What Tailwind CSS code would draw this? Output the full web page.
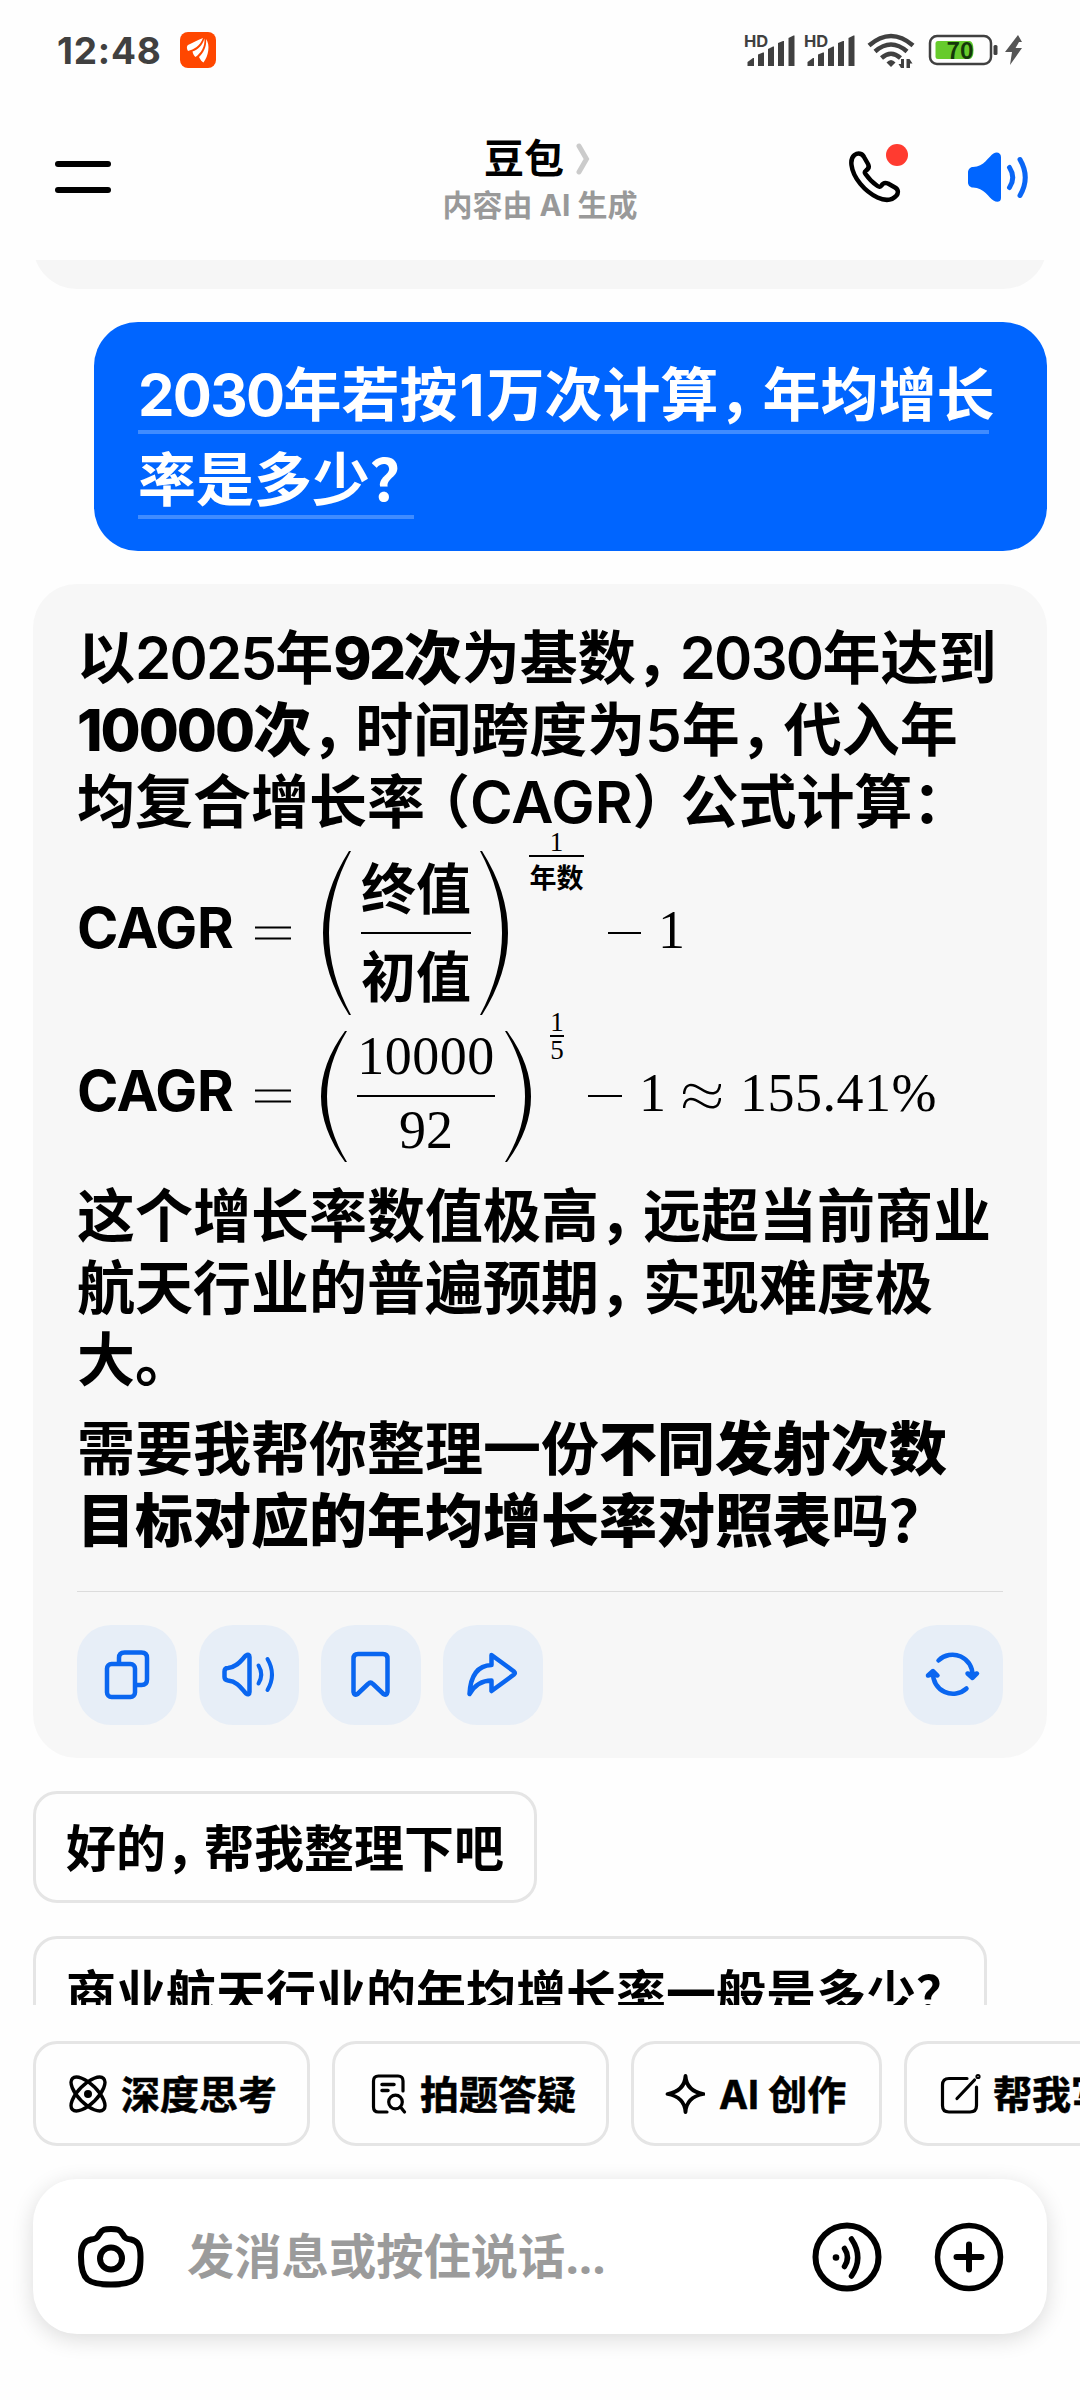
<!DOCTYPE html>
<html lang="zh-CN">
<head>
    <meta charset="UTF-8">
    <meta name="viewport" content="width=device-width, initial-scale=1.0">
    <title>豆包</title>
    <script src="https://cdn.jsdelivr.net/npm/@tailwindcss/browser@4"></script>
</head>
<body class="bg-[#fefefe]">
    <div class="w-[1080px] h-[2400px] overflow-hidden flex flex-col font-bold text-black font-['Inter','Noto_Sans_CJK_SC',sans-serif]">

        <!-- Status bar -->
        <div class="h-[100px] shrink-0 flex items-center pl-[57px] pr-[57px] text-[#404040]">
            <div class="w-[123px] text-[37px] leading-[40px] tracking-[0.8px] pt-px">12:48</div>
            <svg class="w-9 h-9" viewBox="0 0 36 36">
                <rect width="36" height="36" rx="8" fill="#ff4700"/>
                <g fill="#fff">
                    <path d="M23 6C17 8 13 11 8 13C6.500 14 6.500 17 8 19C14 17.500 20 14 23 6Z"/>
                    <path d="M24.500 6.500C22 14 18 17.500 12.500 19.500C13 22 14 24 15.500 25C21 21 25 15 24.500 6.500Z"/>
                    <path d="M26 7C27 15 23 21 19 25C20.500 28 22 30 23.500 30.500C28.500 24 30.500 13 26 7Z"/>
                </g>
            </svg>
            <div class="flex-1"></div>
            <svg class="w-[280px] h-10" viewBox="743 30 280 40" fill="#404040">
                <g font-family="Inter, sans-serif" font-weight="700" font-size="16.500">
                    <text x="744" y="46.500">HD</text>
                    <text x="804" y="46.500">HD</text>
                </g>
                <g id="bars">
                    <path d="M747.500 66V62L753 58H754V66Z"/>
                    <path d="M758 66V54.500L763 52.500H764V66Z"/>
                    <path d="M768 66V49L773 46.500H774V66Z"/>
                    <path d="M778 66V43L783 41H784V66Z"/>
                    <path d="M788.500 66V38L793.500 35.500H794.500V66Z"/>
                </g>
                <use href="#bars" x="60"/>
                <g fill="none" stroke="#404040" stroke-width="4.500">
                    <path d="M869 45.500Q891 26.500 913 45.500"/>
                    <path d="M875 51.500Q891 37.500 907 51.500"/>
                    <path d="M881.500 58Q891 49.500 900.500 58"/>
                </g>
                <path d="M886.500 62.500Q891 57.500 895.500 62.500L891 67Z"/>
                <path d="M904 59V68H901L898.500 64H901V59ZM906.500 68V59H909.500L912.500 63.500H910V68Z"/>
                <rect x="930" y="36" width="61" height="28" rx="7" fill="none" stroke="#404040" stroke-width="2.500"/>
                <path d="M938 41H970V59H938Q935.500 59 935.500 56.500V43.500Q935.500 41 938 41Z" fill="#66cb2c"/>
                <path d="M970 41Q973.500 42 973.500 50T970 59Z" fill="#66cb2c"/>
                <rect x="993.500" y="45" width="4" height="10" rx="1.500"/>
                <text x="960" y="59" text-anchor="middle" font-family="Noto Sans CJK SC, sans-serif" font-weight="700" font-size="23" fill="#14380a">70</text>
                <path d="M1018 35L1005 52H1012L1010 65L1022 48H1015.500L1019 42H1022Z" fill="#555"/>
            </svg>
        </div>

        <!-- Header -->
        <header class="relative h-40 shrink-0 flex justify-between pl-[55px] pr-[51px]">
            <div class="mt-[61px] flex flex-col gap-5">
                <span class="w-14 h-1.5 rounded-full bg-black"></span>
                <span class="w-14 h-1.5 rounded-full bg-black"></span>
            </div>
            <div class="absolute inset-x-0 top-[35px] flex flex-col items-center">
                <div class="flex items-center gap-3 pr-1.5">
                    <h1 class="text-[40px] leading-[48px]">豆包</h1>
                    <svg class="w-3.5 h-8" viewBox="0 0 14 32"><path d="M3 3L10.500 16L3 29" fill="none" stroke="#cbcbcb" stroke-width="5" stroke-linecap="round"/></svg>
                </div>
                <p class="text-[30px] leading-[44px] text-[#999]">内容由 AI 生成</p>
            </div>
            <div class="flex gap-[58px] mt-[43px]">
                <svg class="w-[62px] h-[62px]" viewBox="847 143 62 62">
                    <path d="M854.500 155C858 152.500 862.500 153.500 864 157L868 164C869.500 167 868.500 169 866 170.500C864.500 171.500 864.500 172.500 865.500 174C869 179 873 183 877.500 186C879 187 880.500 187 881.500 185.500C883 183 885.500 182.500 888 183.500L895 187.500C898.500 189.500 898.500 193 896.500 195.500C892 200.500 885 201 877.500 197.500C865 191.500 853 178 851.500 165C851 161 852 157 854.500 155Z" fill="none" stroke="#000" stroke-width="4.500" stroke-linejoin="round"/>
                    <circle cx="897" cy="155" r="11" fill="#ff3b30"/>
                </svg>
                <svg class="w-[62px] h-[62px]" viewBox="967 143 62 62">
                    <path d="M973 167C984 167 989 156 993.500 153.500C997 151.500 1001 153 1001 157V198C1001 202 997 203 993.500 200.500C989 198 984 187.500 973 187.500C970 187.500 968 185 968 182.500V172.500C968 169.500 970 167 973 167Z" fill="#0065ff"/>
                    <g fill="none" stroke="#0a66f5" stroke-width="5" stroke-linecap="round"><path d="M1009.500 167.500Q1016 177.500 1009.500 187.500"/><path d="M1020 159.500Q1030.500 177.500 1020 195.500"/></g>
                </svg>
            </div>
        </header>

        <!-- Conversation -->
        <main class="h-[1745px] shrink-0 overflow-hidden px-[33px] flex flex-col">
            <div class="h-[100px] -mt-[71px] shrink-0 rounded-[44px] bg-[#f6f6f6]"></div>

            <div class="mt-[33px] ml-[61px] h-[229px] shrink-0 rounded-[44px] bg-[#0065ff] text-white text-[58px] pl-11 pt-[27px] flex flex-col items-start whitespace-nowrap">
                <div class="h-[85px] border-b-4 border-[#408cff] leading-[93px] w-[851px]"><span class="tracking-[-1.7px]">2030</span>年若按<span class="mx-0.5">1</span>万次计算<span class="-mr-3.5">，</span>年均增长</div>
                <div class="h-[85px] border-b-4 border-[#408cff] leading-[93px] w-[276px]">率是多少？</div>
            </div>

            <section class="mt-[33px] h-[1174px] shrink-0 rounded-[44px] bg-[#f7f7f7] px-11 pt-[38px] text-[58px] leading-[72px] whitespace-nowrap flex flex-col">
                <p>以<span class="tracking-[-1.7px] font-semibold">2025</span>年<b class="font-black"><span class="font-extrabold tracking-[-2.5px]">92</span>次</b>为基数<span class="-mr-3.5">，</span><span class="tracking-[-1.7px] font-semibold">2030</span>年达到<br><b class="font-black"><span class="font-extrabold tracking-[-2px]">10000</span>次</b><span class="-mr-3.5">，</span>时间跨度为<span class="font-semibold">5</span>年<span class="-mr-3.5">，</span>代入年<br>均复合增长率<span class="-ml-[13px]">（</span><span class="font-semibold">CAGR</span><span class="-mr-[10px]">）</span>公式计算：</p>

                <!-- CAGR = (终值 / 初值)^(1/年数) - 1 -->
                <div class="h-[186px] mt-[2px] flex items-center font-['Liberation_Serif',serif] font-normal text-[54px]">
                    <span class="w-[178px] pb-2.5 font-bold text-[56px] tracking-[-0.5px] font-['Inter',sans-serif]">CAGR</span>
                    <svg class="w-9 h-4" viewBox="0 0 36 16"><path d="M0 2.500H36M0 13.500H36" stroke="#000" stroke-width="2"/></svg>
                    <svg class="ml-8 w-7 h-[164px]" viewBox="0 0 28 164"><path d="M26 0Q-26 82 26 164H28Q-16 82 28 0Z"/></svg>
                    <span class="ml-[10px] w-[110px] flex flex-col items-center font-bold text-[55px] leading-[87px] font-['Inter','Noto_Sans_CJK_SC',sans-serif]">
                        <span class="h-[87px] leading-[88px]">终值</span>
                        <span class="w-full h-0.5 bg-black"></span>
                        <span class="h-[87px] leading-[86px]">初值</span>
                    </span>
                    <svg class="ml-[9px] w-7 h-[164px]" viewBox="0 0 28 164"><path d="M2 0Q54 82 2 164H0Q44 82 0 0Z"/></svg>
                    <span class="self-start -mt-[10px] ml-[21px] w-[55px] flex flex-col items-center">
                        <span class="h-[25px] text-[27px] leading-[24px]">1</span>
                        <span class="w-full h-0.5 bg-black"></span>
                        <span class="text-[27px] leading-[39px] font-bold font-['Noto_Sans_CJK_SC',sans-serif]">年数</span>
                    </span>
                    <span class="ml-6 w-[33px] h-0.5 bg-black"></span>
                    <span class="ml-[17px] pb-1.5">1</span>
                </div>

                <!-- CAGR = (10000 / 92)^(1/5) - 1 -->
                <div class="h-[140px] flex items-center font-['Liberation_Serif',serif] font-normal text-[54px]">
                    <span class="w-[178px] pb-2.5 font-bold text-[56px] tracking-[-0.5px] font-['Inter',sans-serif]">CAGR</span>
                    <svg class="w-9 h-4" viewBox="0 0 36 16"><path d="M0 2.500H36M0 13.500H36" stroke="#000" stroke-width="2"/></svg>
                    <svg class="ml-[30px] w-[26px] h-[131px]" viewBox="0 0 26 131"><path d="M24 0Q-24 65.500 24 131H26Q-14 65.500 26 0Z"/></svg>
                    <span class="ml-[10px] w-[138px] flex flex-col items-center text-[54px] leading-[74px]">
                        <span class="h-[70px] leading-[62px] tracking-[0.5px]">10000</span>
                        <span class="w-full h-0.5 bg-black"></span>
                        <span class="h-[70px] leading-[66px]">92</span>
                    </span>
                    <svg class="ml-[10px] w-[26px] h-[131px]" viewBox="0 0 26 131"><path d="M2 0Q50 65.500 2 131H0Q40 65.500 0 0Z"/></svg>
                    <span class="self-start -mt-4 ml-[19px] w-[14px] flex flex-col items-center">
                        <span class="h-[25px] text-[27px] leading-[24px]">1</span>
                        <span class="w-full h-0.5 bg-black"></span>
                        <span class="text-[27px] leading-[26px]">5</span>
                    </span>
                    <span class="ml-6 w-[34px] h-0.5 bg-black"></span>
                    <span class="ml-[17px] pb-1.5">1</span>
                    <svg class="ml-[17px] w-[38px] h-[26px]" viewBox="0 0 38 26" fill="none" stroke="#000" stroke-width="2.500"><path d="M1 11C2 0 9 0 18 6S36 13 37 1"/><path d="M1 25C2 14 9 14 18 20S36 27 37 15"/></svg>
                    <span class="ml-[19px] pb-1.5 tracking-[0.5px]">155.41%</span>
                </div>

                <p class="mt-[14px]">这个增长率数值极高<span class="-mr-3.5">，</span>远超当前商业<br>航天行业的普遍预期<span class="-mr-3.5">，</span>实现难度极<br>大。</p>
                <p class="mt-[17px]">需要我帮你整理一份<b class="font-black">不同发射次数<br>目标对应的年均增长率对照表</b>吗？</p>

                <div class="mt-[34px] h-px shrink-0 bg-[#dcdcdc]"></div>
                <div class="mt-[33px] flex gap-[22px]">
                    <button class="w-[100px] h-[100px] rounded-[34px] bg-[#e7eef7]">
                        <svg class="w-full h-full" viewBox="77 1625 100 100" fill="none" stroke="#0a66f0" stroke-width="4.500"><rect x="107" y="1664" width="28" height="33" rx="4.500"/><path d="M119 1664V1658Q119 1652.500 124.500 1652.500H141.500Q147 1652.500 147 1658V1679.500Q147 1685 141.500 1685H135"/></svg>
                    </button>
                    <button class="w-[100px] h-[100px] rounded-[34px] bg-[#e7eef7]">
                        <svg class="w-full h-full" viewBox="199 1625 100 100" fill="none" stroke="#0a66f0" stroke-width="4.500" stroke-linecap="round" stroke-linejoin="round"><path d="M228 1668C238 1667 242 1659 246 1655.500C248 1654 249.500 1654.500 249.500 1657V1692C249.500 1694.500 248 1695 246 1693.500C242 1689.500 238 1681.500 228 1680.500Q224.500 1680 224.500 1677V1671.500Q224.500 1668 228 1668Z"/><path d="M258.500 1665.500Q264 1674.500 258.500 1683.500M267.500 1659Q276.500 1674.500 267.500 1690" stroke-width="4"/></svg>
                    </button>
                    <button class="w-[100px] h-[100px] rounded-[34px] bg-[#e7eef7]">
                        <svg class="w-full h-full" viewBox="321 1625 100 100" fill="none" stroke="#0a66f0" stroke-width="4.500" stroke-linejoin="round"><path d="M358 1654H383Q387.500 1654 387.500 1658.500V1692Q387 1696 383.500 1694L373 1684Q370.500 1681.500 368 1684L357.500 1694Q354 1696 353.500 1692V1658.500Q353.500 1654 358 1654Z"/></svg>
                    </button>
                    <button class="w-[100px] h-[100px] rounded-[34px] bg-[#e7eef7]">
                        <svg class="w-full h-full" viewBox="443 1625 100 100" fill="none" stroke="#0a66f0" stroke-width="4.500" stroke-linejoin="round"><path d="M491.500 1655L514 1671.500Q515.500 1673 514 1674.500L491.500 1691V1680.500C482 1680.500 475 1684.500 469.500 1694C470.500 1676 477.500 1665.500 491.500 1665Z"/></svg>
                    </button>
                    <button class="ml-auto w-[100px] h-[100px] rounded-[34px] bg-[#e7eef7]">
                        <svg class="w-full h-full" viewBox="903 1625 100 100" fill="none" stroke="#0a66f0" stroke-width="4.500" stroke-linecap="round" stroke-linejoin="round"><path d="M938.500 1660.500A20 20 0 0 1 972.500 1676"/><path d="M967.500 1673.500L972.500 1678L977 1673.500L972.500 1675Z"/><path d="M966.500 1688.500A20 20 0 0 1 933 1673"/><path d="M928 1675.500L933 1671L937.500 1675.500L933 1674Z"/></svg>
                    </button>
                </div>
            </section>

            <div class="mt-[33px] flex flex-col items-start gap-[33px] text-[50px] whitespace-nowrap">
                <button class="w-[504px] h-28 rounded-3xl border-3 border-[#e5e5e5] pl-[30px] text-left leading-[110px]">好的<span class="-mr-3">，</span>帮我整理下吧</button>
                <button class="w-[954px] h-28 rounded-3xl border-3 border-[#e5e5e5] pl-[30px] text-left leading-[110px]">商业航天行业的年均增长率一般是多少？</button>
            </div>
        </main>

        <!-- Tools -->
        <div class="mt-9 ml-[33px] shrink-0 flex gap-[22px] text-[39px] leading-[54px] whitespace-nowrap [-webkit-text-stroke:0.5px_#000]">
            <button class="w-[277px] h-[105px] shrink-0 rounded-3xl border-3 border-[#e5e5e5] flex items-center pl-[32px]">
                <svg class="w-10 h-10 mr-[13px]" viewBox="0 0 40 40" fill="none" stroke="#000" stroke-width="3.400"><ellipse cx="20" cy="20" rx="22" ry="9.500" transform="rotate(45 20 20)"/><ellipse cx="20" cy="20" rx="22" ry="9.500" transform="rotate(-45 20 20)"/><circle cx="20" cy="20" r="4" fill="#000" stroke="none"/></svg>
                <span class="pt-[3px]">深度思考</span>
            </button>
            <button class="w-[277px] h-[105px] shrink-0 rounded-3xl border-3 border-[#e5e5e5] flex items-center pl-[32px]">
                <svg class="w-10 h-10 mr-[13px]" viewBox="0 0 40 40" fill="none" stroke="#000" stroke-width="3.200" stroke-linecap="round"><path d="M20 38H11.500Q6.500 38 6.500 33V7Q6.500 2 11.500 2H31Q36 2 36 7V17"/><path d="M15 10.500H27M15 16.500H21" stroke-width="3.500"/><circle cx="28.500" cy="28" r="6.800"/><path d="M33.500 33L37.500 38"/></svg>
                <span class="pt-[3px]">拍题答疑</span>
            </button>
            <button class="w-[251px] h-[105px] shrink-0 rounded-3xl border-3 border-[#e5e5e5] flex items-center pl-[31px]">
                <svg class="w-10 h-10 mr-[14px]" viewBox="0 0 40 40" fill="none" stroke="#000" stroke-width="3.800" stroke-linejoin="round"><path d="M20.500 2Q21.500 17 38.500 20Q21.500 23 20.500 38Q19.500 23 2.500 20Q19.500 17 20.500 2Z"/></svg>
                <span class="pt-[3px]">AI 创作</span>
            </button>
            <button class="w-[277px] h-[105px] shrink-0 rounded-3xl border-3 border-[#e5e5e5] flex items-center pl-[32px]">
                <svg class="w-10 h-10 mr-[14px] overflow-visible" viewBox="0 0 40 40" fill="none" stroke="#000" stroke-width="3.200" stroke-linecap="round"><path d="M28 4.500H10Q3.500 4.500 3.500 11V31.500Q3.500 38 10 38H31Q37.500 38 37.500 31.500V13"/><path d="M18 24.500L35.500 6"/><circle cx="39" cy="2.500" r="1"/></svg>
                <span class="pt-[3px]">帮我写作</span>
            </button>
        </div>

        <!-- Message input -->
        <div class="mt-[33px] mx-[33px] h-[155px] shrink-0 rounded-[44px] bg-white shadow-[0_5px_22px_rgba(0,0,0,0.14)] flex items-center pl-11 pr-[43px]">
            <svg class="w-[68px] h-[66px]" viewBox="77 2223 68 66" fill="none" stroke="#000" stroke-width="6"><path d="M111 2228C117 2228 120 2228.500 122.500 2233C125 2237.500 126.500 2238 131 2238.500C138 2240 140.500 2245 140.500 2256C140.500 2267 139.500 2274 134.500 2278.500C129 2283 120 2283.500 111 2283.500S93 2283 87.500 2278.500C82.500 2274 81 2267 81 2256C81 2245 84 2240 91 2238.500C95.500 2238 97 2237.500 99.500 2233C102 2228.500 105 2228 111 2228Z"/><circle cx="111" cy="2257.500" r="11"/></svg>
            <span class="flex-1 ml-[42px] text-[47.300px] leading-[60px] text-[#9b9b9b]">发消息或按住说话<span class="font-['Open_Sans',sans-serif]">...</span></span>
            <svg class="w-[70px] h-[70px] mr-[52px]" viewBox="0 0 70 70" fill="none" stroke="#000" stroke-width="6" stroke-linecap="round"><circle cx="35" cy="35" r="31.500"/><circle cx="24" cy="35.500" r="3.300" fill="#000" stroke="none"/><path d="M32.500 26.500Q38.500 35.500 32.500 44.500" stroke-width="5.500"/><path d="M39.500 17Q52 35.500 39.500 54" stroke-width="5.500"/></svg>
            <svg class="w-[70px] h-[70px]" viewBox="0 0 70 70" fill="none" stroke="#000" stroke-width="5.500" stroke-linecap="round"><circle cx="35" cy="35" r="31.500"/><path d="M35 22.500V47.500M22.500 35H47.500" stroke-width="6"/></svg>
        </div>
    </div>
</body>
</html>
